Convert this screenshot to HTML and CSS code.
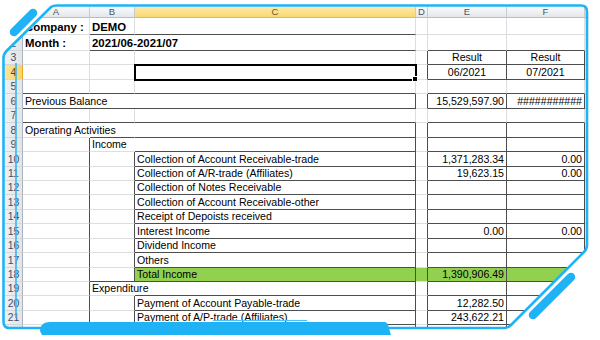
FILE: index.html
```html
<!DOCTYPE html>
<html lang="en">
<head>
    <meta charset="UTF-8">
    <title>Cash Flow - DEMO</title>
    <link rel="stylesheet" href="styles.css">
</head>
<body>
    <div class="frame">
        <div class="sheet-clip">
            <table class="sheet">
                <colgroup>
                    <col class="c-h"><col class="c-a"><col class="c-b"><col class="c-c"><col class="c-d"><col class="c-e"><col class="c-f"><col class="c-g">
                </colgroup>
                <thead>
                    <tr class="col-head">
                        <th class="corner"></th><th>A</th><th>B</th><th class="sel">C</th><th>D</th><th>E</th><th>F</th><th></th>
                    </tr>
                </thead>
                <tbody>
                    <tr class="tall">
                        <th class="rh">1</th><td class="bold">Company :</td><td class="bold b">DEMO</td><td class="b"></td><td></td><td></td><td></td><td></td>
                    </tr>
                    <tr class="tall">
                        <th class="rh">2</th><td class="bold">Month :</td><td class="bold b nr">2021/06-2021/07</td><td class="b"></td><td></td><td class="b"></td><td class="b"></td><td></td>
                    </tr>
                    <tr>
                        <th class="rh">3</th><td></td><td></td><td></td><td class="r"></td><td class="ctr r b">Result</td><td class="ctr r b">Result</td><td></td>
                    </tr>
                    <tr>
                        <th class="rh sel">4</th><td></td><td></td><td class="active"></td><td class="r"></td><td class="ctr r b">06/2021</td><td class="ctr r b">07/2021</td><td></td>
                    </tr>
                    <tr>
                        <th class="rh">5</th><td class="b"></td><td class="b"></td><td class="b"></td><td></td><td class="b"></td><td class="b"></td><td></td>
                    </tr>
                    <tr>
                        <th class="rh">6</th><td colspan="3" class="b r">Previous Balance</td><td class="r"></td><td class="num r b">15,529,597.90</td><td class="num r b">###########</td><td></td>
                    </tr>
                    <tr>
                        <th class="rh">7</th><td class="b"></td><td class="b"></td><td class="b"></td><td></td><td class="b"></td><td class="b"></td><td></td>
                    </tr>
                    <tr>
                        <th class="rh">8</th><td class="nr">Operating Activities</td><td class="b nr"></td><td class="b r"></td><td class="r"></td><td class="r b"></td><td class="r b"></td><td></td>
                    </tr>
                    <tr>
                        <th class="rh">9</th><td class="r"></td><td class="nr">Income</td><td class="b r"></td><td class="r"></td><td class="r b"></td><td class="r b"></td><td></td>
                    </tr>
                    <tr>
                        <th class="rh">10</th><td class="r"></td><td class="r"></td><td class="b r">Collection of Account Receivable-trade</td><td class="r"></td><td class="num r b">1,371,283.34</td><td class="num r b">0.00</td><td></td>
                    </tr>
                    <tr>
                        <th class="rh">11</th><td class="r"></td><td class="r"></td><td class="b r">Collection of A/R-trade (Affiliates)</td><td class="r"></td><td class="num r b">19,623.15</td><td class="num r b">0.00</td><td></td>
                    </tr>
                    <tr>
                        <th class="rh">12</th><td class="r"></td><td class="r"></td><td class="b r">Collection of Notes Receivable</td><td class="r"></td><td class="num r b"></td><td class="num r b"></td><td></td>
                    </tr>
                    <tr>
                        <th class="rh">13</th><td class="r"></td><td class="r"></td><td class="b r">Collection of Account Receivable-other</td><td class="r"></td><td class="num r b"></td><td class="num r b"></td><td></td>
                    </tr>
                    <tr>
                        <th class="rh">14</th><td class="r"></td><td class="r"></td><td class="b r">Receipt of Depoists received</td><td class="r"></td><td class="num r b"></td><td class="num r b"></td><td></td>
                    </tr>
                    <tr>
                        <th class="rh">15</th><td class="r"></td><td class="r"></td><td class="b r">Interest Income</td><td class="r"></td><td class="num r b">0.00</td><td class="num r b">0.00</td><td></td>
                    </tr>
                    <tr>
                        <th class="rh">16</th><td class="r"></td><td class="r"></td><td class="b r">Dividend Income</td><td class="r"></td><td class="num r b"></td><td class="num r b"></td><td></td>
                    </tr>
                    <tr>
                        <th class="rh">17</th><td class="r"></td><td class="r"></td><td class="b r">Others</td><td class="r"></td><td class="num r b"></td><td class="num r b"></td><td></td>
                    </tr>
                    <tr>
                        <th class="rh">18</th><td class="r"></td><td class="r b"></td><td class="b r green">Total Income</td><td class="r green"></td><td class="num r b green">1,390,906.49</td><td class="num r b green"></td><td></td>
                    </tr>
                    <tr>
                        <th class="rh">19</th><td class="r"></td><td class="nr">Expenditure</td><td class="b r"></td><td class="r"></td><td class="r b"></td><td class="r b"></td><td></td>
                    </tr>
                    <tr>
                        <th class="rh">20</th><td class="r"></td><td class="r"></td><td class="b r">Payment of Account Payable-trade</td><td class="r"></td><td class="num r b">12,282.50</td><td class="num r b"></td><td></td>
                    </tr>
                    <tr>
                        <th class="rh">21</th><td class="r"></td><td class="r"></td><td class="b r">Payment of A/P-trade (Affiliates)</td><td class="r"></td><td class="num r b">243,622.21</td><td class="num r b"></td><td></td>
                    </tr>
                    <tr>
                        <th class="rh">22</th><td class="r"></td><td class="r"></td><td class="b r"></td><td class="r"></td><td class="num r b"></td><td class="num r b"></td><td></td>
                    </tr>
                </tbody>
            </table>
        </div>

        <!-- blue frame drawn over the sheet -->
        <svg class="frame-art" width="600" height="340" viewBox="0 0 600 340">
            <path class="edge" d="M57 5.5 L581 5.5 Q587 5.5 587 11.5 L587 245 Q587 249 584 252 L511 325 Q508 328 504 328 L9.5 328 Q3.5 328 3.5 322 L3.5 58 Q3.5 54 6.5 51 L51 7 Q53 5.5 57 5.5 Z"/>
            <line class="blob" x1="14" y1="32" x2="33" y2="13"/>
            <line class="blob" x1="533" y1="315" x2="571" y2="277"/>
            <path class="band" d="M40 331 C40 325 44 322 50 322 L384 322 Q387 322 388 325 L391 335 L42 335 Z"/>
            <line class="thin" x1="16" y1="63" x2="16" y2="318"/>
            <line class="hair" x1="213" y1="320.5" x2="307" y2="320.5"/>
        </svg>
    </div>
</body>
</html>
```

FILE: styles.css
```css
body {
    margin: 0;
    background: #fff;
    font-family: "Liberation Sans", Arial, sans-serif;
}

.frame {
    position: relative;
    width: 600px;
    height: 340px;
    overflow: hidden;
    background: #fff;
}

.sheet-clip {
    width: 600px;
    height: 340px;
    padding: 7px 0 0 5px;
    box-sizing: border-box;
    clip-path: path('M57 5.5 L581 5.5 Q587 5.5 587 11.5 L587 245 Q587 249 584 252 L511 325 Q508 328 504 328 L9.5 328 Q3.5 328 3.5 322 L3.5 58 Q3.5 54 6.5 51 L51 7 Q53 5.5 57 5.5 Z');
}

.sheet {
    table-layout: fixed;
    border-collapse: separate;
    border-spacing: 0;
    width: 595px;
    font-size: 10.6px;
    color: #000;
}

.c-h { width: 18px; }
.c-a { width: 67px; }
.c-b { width: 45px; }
.c-c { width: 281px; }
.c-d { width: 12px; }
.c-e { width: 79px; }
.c-f { width: 78px; }
.c-g { width: 15px; }

.sheet tr {
    height: 14.45px;
}

.sheet tr.tall {
    height: 16.5px;
}

.sheet td {
    padding: 0 2px;
    line-height: 13px;
    white-space: nowrap;
    overflow: visible;
    vertical-align: bottom;
    border-right: 1px solid #dcdee1;
    border-bottom: 1px solid #dcdee1;
}

/* column letters */
.sheet tr.col-head {
    height: 11px;
}

.col-head th {
    padding: 0;
    font-size: 9.5px;
    font-weight: normal;
    line-height: 10px;
    color: #4a5568;
    background: linear-gradient(#f9fafb, #e4e7eb);
    border-right: 1px solid #c8ccd2;
    border-bottom: 1px solid #b6bdc6;
}

.col-head th.sel {
    color: #6b5418;
    background: linear-gradient(#fee9a6, #f9d772);
    border-bottom-color: #f0b93a;
}

/* row numbers */
.rh {
    padding: 0;
    font-size: 10.4px;
    font-weight: normal;
    line-height: 13px;
    color: #3f4d61;
    text-align: center;
    vertical-align: bottom;
    background: linear-gradient(90deg, #eef0f3, #e2e5e9);
    border-right: 1px solid #aab3be;
    border-bottom: 1px solid #d3d7dc;
}

.rh.sel {
    color: #5c4712;
    background: linear-gradient(90deg, #fce39a, #f7d46b);
    border-right-color: #e9a92b;
}

.bold {
    font-weight: bold;
    font-size: 11.4px;
}

.ctr {
    text-align: center;
}

.num {
    text-align: right;
}

.sheet td.r {
    border-right-color: #4d4d4d;
}

.sheet td.b {
    border-bottom-color: #4d4d4d;
}

.sheet td.nr {
    border-right-color: transparent;
}

.sheet td.green {
    background: #92d050;
}

.sheet td.active {
    position: relative;
    outline: 2px solid #000;
    outline-offset: -1px;
}

.sheet td.active::after {
    content: "";
    position: absolute;
    right: -3px;
    bottom: -3px;
    width: 4px;
    height: 4px;
    background: #000;
    border: 1px solid #fff;
}

/* frame artwork */
.frame-art {
    position: absolute;
    left: 0;
    top: 0;
    pointer-events: none;
}

.frame-art .edge {
    fill: none;
    stroke: #1fb3f5;
    stroke-width: 2.6;
}

.frame-art .blob {
    stroke: #1fb3f5;
    stroke-width: 8.5;
    stroke-linecap: round;
}

.frame-art .band {
    fill: #1fb3f5;
}

.frame-art .thin {
    stroke: #35b6f0;
    stroke-width: 1.6;
}

.frame-art .hair {
    stroke: #4cc2f6;
    stroke-width: 1;
}
```
